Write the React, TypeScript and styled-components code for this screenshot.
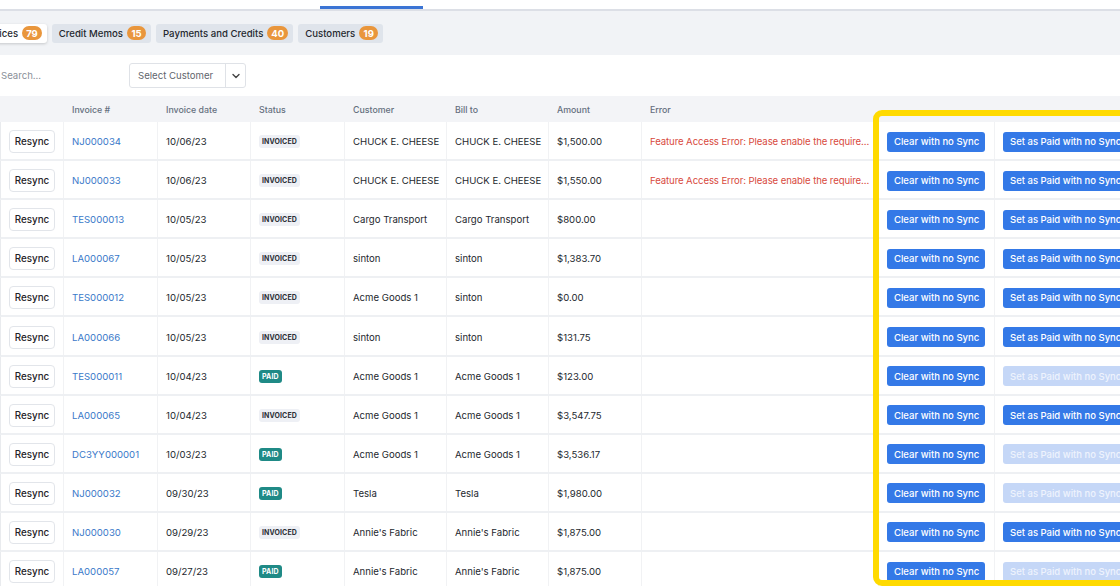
import React from "react";
import styled, { createGlobalStyle } from "styled-components";

const Global = createGlobalStyle`
  html, body { margin: 0; padding: 0; overflow: hidden; background: #ffffff; }
  body { font-family: Inter, "Noto Sans", "Liberation Sans", sans-serif; color: #24282e; -webkit-font-smoothing: antialiased; }
  * { box-sizing: border-box; }
`;

const Page = styled.div`
  width: 1120px;
  height: 586px;
  overflow: hidden;
  display: flex;
  flex-direction: column;
`;

const TopNav = styled.div`
  flex-shrink: 0;
  height: 11px;
  overflow: hidden;
  display: flex;
  align-items: flex-end;
  background: #fff;
  border-bottom: 2px solid #dcdfe6;
  padding-left: 60px;
`;

const NavItem = styled.div<{ $active?: boolean; $w: number }>`
  width: ${(p) => p.$w}px;
  height: 40px;
  display: flex;
  align-items: center;
  justify-content: center;
  font-size: 13px;
  color: #555;
  border-bottom: 3px solid ${(p) => (p.$active ? "#3b74d4" : "transparent")};
`;

const TabStrip = styled.div`
  flex-shrink: 0;
  background: #f1f3f6;
  height: 44px;
  display: flex;
  align-items: center;
  gap: 5px;
  margin-left: -27px;
`;

const Tab = styled.div<{ $active?: boolean }>`
  height: 19px;
  display: flex;
  align-items: center;
  gap: 4px;
  padding: 0 5px 0 7px;
  border-radius: 3px;
  font-size: 9.6px;
  font-weight: 500;
  color: #24282e;
  background: ${(p) => (p.$active ? "#ffffff" : "#dfe4eb")};
  box-shadow: ${(p) => (p.$active ? "0 1px 3px rgba(0,0,0,0.18)" : "none")};
`;

const Count = styled.span`
  background: #e9963c;
  color: #fff;
  font-size: 9.5px;
  font-weight: 700;
  height: 14px;
  min-width: 19px;
  padding: 0 4px;
  border-radius: 7px;
  display: inline-flex;
  align-items: center;
  justify-content: center;
`;

const FilterBar = styled.div`
  flex-shrink: 0;
  height: 41px;
  display: flex;
  align-items: center;
  gap: 8px;
  background: #fff;
`;

const Search = styled.input`
  width: 121px;
  height: 25px;
  border: none;
  outline: none;
  padding: 0 0 0 1px;
  font-family: inherit;
  font-size: 9.6px;
  color: #333;
  &::placeholder { color: #8a9099; }
`;

const SelectBox = styled.div`
  width: 117px;
  height: 25px;
  border: 1px solid #dfe2e7;
  border-radius: 3px;
  display: flex;
  align-items: stretch;
  font-size: 9.6px;
  color: #5f656d;
`;

const SelectLabel = styled.div`
  flex: 1;
  display: flex;
  align-items: center;
  padding-left: 8px;
`;

const SelectArrow = styled.div`
  width: 20px;
  border-left: 1px solid #dfe2e7;
  display: flex;
  align-items: center;
  justify-content: center;
`;

const TableWrap = styled.div`
  position: relative;
  flex: 1;
  min-height: 0;
`;

const cols = "63px 94px 93px 94px 102px 102px 93px 237px 116px 160px";

const HeadRow = styled.div`
  display: grid;
  grid-template-columns: ${cols};
  height: 26px;
  background: #f3f4f7;
  align-items: center;
  border-left: 1px solid transparent;
`;

const HeadCell = styled.div`
  padding: 0 8px;
  font-size: 8.8px;
  font-weight: 500;
  color: #65707e;
`;

const Row = styled.div`
  display: grid;
  grid-template-columns: ${cols};
  height: 39.1px;
  border-bottom: 2px solid #eef0f3;
  border-left: 1px solid #e9ebee;
`;

const Cell = styled.div<{ $tone?: "link" | "error" }>`
  display: flex;
  align-items: center;
  padding: 2px 8px 0;
  font-size: 9.6px;
  border-right: 1px solid #f1f2f4;
  white-space: nowrap;
  overflow: hidden;
  color: ${(p) => (p.$tone === "link" ? "#3a79c9" : p.$tone === "error" ? "#d8493d" : "#24282e")};
  letter-spacing: ${(p) => (p.$tone === "error" ? "-0.1px" : "normal")};
`;

const Ellipsis = styled.span`
  overflow: hidden;
  text-overflow: ellipsis;
  white-space: nowrap;
`;

const ResyncButton = styled.button`
  height: 23px;
  width: 46px;
  padding: 0;
  background: #fff;
  border: 1px solid #e2e5ea;
  border-radius: 4px;
  font-family: inherit;
  font-size: 9.8px;
  font-weight: 500;
  color: #1f2328;
`;

const Badge = styled.span<{ $paid?: boolean }>`
  display: inline-flex;
  align-items: center;
  height: 13px;
  padding: 0 3px;
  border-radius: 3px;
  font-size: 7px;
  font-weight: 700;
  letter-spacing: 0.1px;
  color: ${(p) => (p.$paid ? "#ffffff" : "#2b2f36")};
  background: ${(p) => (p.$paid ? "#1f8a86" : "#eef0f5")};
`;

const ActionButton = styled.button<{ $disabled?: boolean }>`
  height: 20px;
  padding: 0 6px 0 7px;
  border: none;
  border-radius: 3px;
  font-family: inherit;
  font-size: 9.5px;
  font-weight: 500;
  white-space: nowrap;
  color: ${(p) => (p.$disabled ? "#eef3fd" : "#ffffff")};
  background: ${(p) => (p.$disabled ? "#c5d7f7" : "#3479e7")};
`;

const Highlight = styled.div`
  position: absolute;
  left: 873px;
  top: 14px;
  width: 270px;
  height: 476px;
  border: 6px solid #ffda00;
  border-radius: 9px;
  pointer-events: none;
`;

type Inv = {
  no: string;
  date: string;
  paid: boolean;
  customer: string;
  bill: string;
  amount: string;
  error?: boolean;
};

const ERR = "Feature Access Error: Please enable the required feature in your accounting settings";

const rows: Inv[] = [
  { no: "NJ000034", date: "10/06/23", paid: false, customer: "CHUCK E. CHEESE", bill: "CHUCK E. CHEESE", amount: "$1,500.00", error: true },
  { no: "NJ000033", date: "10/06/23", paid: false, customer: "CHUCK E. CHEESE", bill: "CHUCK E. CHEESE", amount: "$1,550.00", error: true },
  { no: "TES000013", date: "10/05/23", paid: false, customer: "Cargo Transport", bill: "Cargo Transport", amount: "$800.00" },
  { no: "LA000067", date: "10/05/23", paid: false, customer: "sinton", bill: "sinton", amount: "$1,383.70" },
  { no: "TES000012", date: "10/05/23", paid: false, customer: "Acme Goods 1", bill: "sinton", amount: "$0.00" },
  { no: "LA000066", date: "10/05/23", paid: false, customer: "sinton", bill: "sinton", amount: "$131.75" },
  { no: "TES000011", date: "10/04/23", paid: true, customer: "Acme Goods 1", bill: "Acme Goods 1", amount: "$123.00" },
  { no: "LA000065", date: "10/04/23", paid: false, customer: "Acme Goods 1", bill: "Acme Goods 1", amount: "$3,547.75" },
  { no: "DC3YY000001", date: "10/03/23", paid: true, customer: "Acme Goods 1", bill: "Acme Goods 1", amount: "$3,536.17" },
  { no: "NJ000032", date: "09/30/23", paid: true, customer: "Tesla", bill: "Tesla", amount: "$1,980.00" },
  { no: "NJ000030", date: "09/29/23", paid: false, customer: "Annie's Fabric", bill: "Annie's Fabric", amount: "$1,875.00" },
  { no: "LA000057", date: "09/27/23", paid: true, customer: "Annie's Fabric", bill: "Annie's Fabric", amount: "$1,875.00" },
];

export default function App() {
  return (
    <Page>
      <Global />
      <TopNav>
        <NavItem $w={100}>Company</NavItem>
        <NavItem $w={160}>&nbsp;</NavItem>
        <NavItem $w={103} $active>
          Sync
        </NavItem>
      </TopNav>
      <TabStrip>
        <Tab $active>
          Invoices <Count>79</Count>
        </Tab>
        <Tab>
          Credit Memos <Count>15</Count>
        </Tab>
        <Tab>
          Payments and Credits <Count>40</Count>
        </Tab>
        <Tab>
          Customers <Count>19</Count>
        </Tab>
      </TabStrip>
      <FilterBar>
        <Search placeholder="Search..." />
        <SelectBox>
          <SelectLabel>Select Customer</SelectLabel>
          <SelectArrow>
            <svg width="8" height="6" viewBox="0 0 8 6">
              <path d="M1 1.5 L4 4.5 L7 1.5" stroke="#444" strokeWidth="1.4" fill="none" strokeLinecap="round" strokeLinejoin="round" />
            </svg>
          </SelectArrow>
        </SelectBox>
      </FilterBar>
      <TableWrap>
        <HeadRow>
          <HeadCell />
          <HeadCell>Invoice #</HeadCell>
          <HeadCell>Invoice date</HeadCell>
          <HeadCell>Status</HeadCell>
          <HeadCell>Customer</HeadCell>
          <HeadCell>Bill to</HeadCell>
          <HeadCell>Amount</HeadCell>
          <HeadCell>Error</HeadCell>
          <HeadCell />
          <HeadCell />
        </HeadRow>
        {rows.map((r) => (
          <Row key={r.no}>
            <Cell>
              <ResyncButton>Resync</ResyncButton>
            </Cell>
            <Cell $tone="link">{r.no}</Cell>
            <Cell>{r.date}</Cell>
            <Cell>
              <Badge $paid={r.paid}>{r.paid ? "PAID" : "INVOICED"}</Badge>
            </Cell>
            <Cell>{r.customer}</Cell>
            <Cell>{r.bill}</Cell>
            <Cell>{r.amount}</Cell>
            <Cell $tone="error">{r.error ? <Ellipsis>{ERR}</Ellipsis> : null}</Cell>
            <Cell>
              <ActionButton>Clear with no Sync</ActionButton>
            </Cell>
            <Cell>
              <ActionButton $disabled={r.paid}>Set as Paid with no Sync</ActionButton>
            </Cell>
          </Row>
        ))}
        <Highlight />
      </TableWrap>
    </Page>
  );
}
